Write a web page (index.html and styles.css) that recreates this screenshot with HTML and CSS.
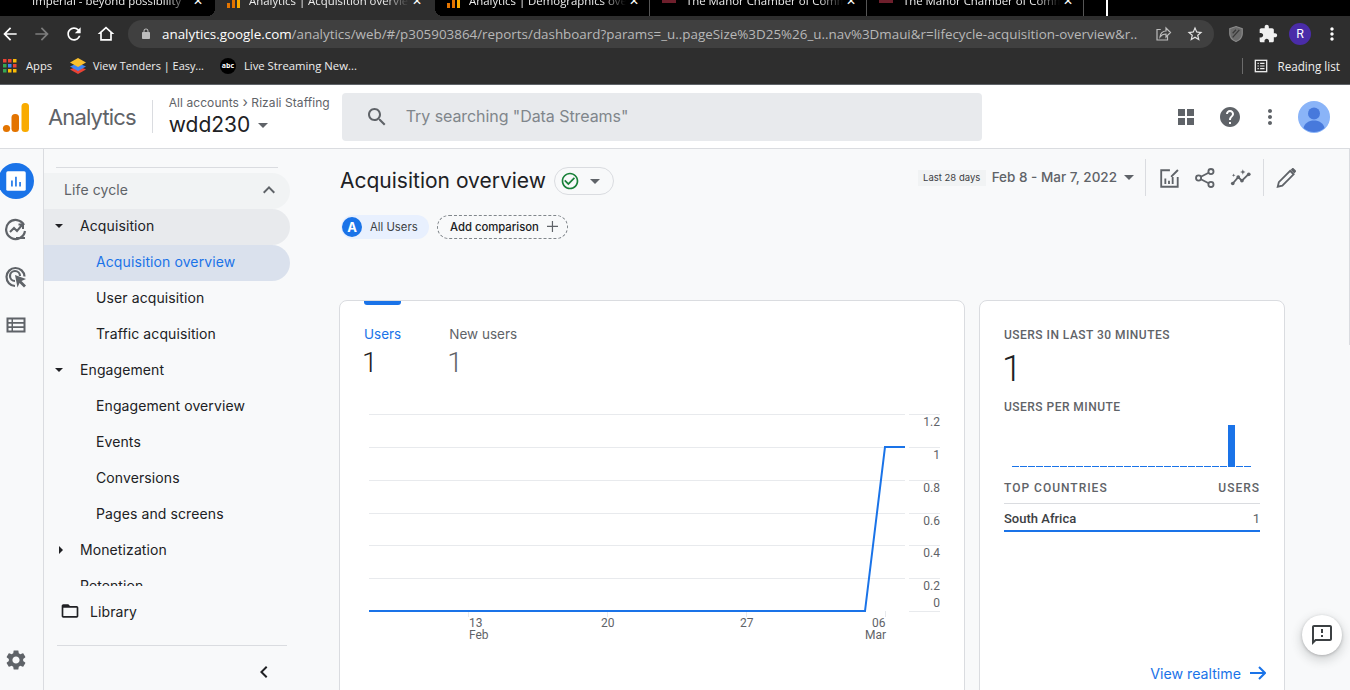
FILE: index.html
```html
<!DOCTYPE html>
<html>
<head lang="en">
    <meta charset="UTF-8">
    <title>Analytics | Acquisition overview</title>
    <link rel="stylesheet" href="styles.css">
</head>
<body>
<div class="tabstrip">
    <div class="tab tab-first"><span class="tab-title">Imperial - beyond possibility</span><span class="tab-x">&#10005;</span></div>
    <div class="tab active">
        <svg class="tab-icon" viewBox="0 0 14 16"><rect x="0" y="11" width="3" height="5" fill="#e37400"/><rect x="5" y="5" width="3" height="11" fill="#e37400"/><rect x="10" y="0" width="3" height="16" fill="#f9ab00"/></svg>
        <span class="tab-title">Analytics | Acquisition overview</span><span class="tab-x">&#10005;</span>
    </div>
    <div class="tab sep">
        <svg class="tab-icon" viewBox="0 0 14 16"><rect x="0" y="11" width="3" height="5" fill="#e37400"/><rect x="5" y="5" width="3" height="11" fill="#e37400"/><rect x="10" y="0" width="3" height="16" fill="#f9ab00"/></svg>
        <span class="tab-title">Analytics | Demographics overview</span><span class="tab-x">&#10005;</span>
    </div>
    <div class="tab sep">
        <span class="tab-icon tab-red"></span>
        <span class="tab-title">The Manor Chamber of Commerce</span><span class="tab-x">&#10005;</span>
    </div>
    <div class="tab sep">
        <span class="tab-icon tab-red"></span>
        <span class="tab-title">The Manor Chamber of Commerce</span><span class="tab-x">&#10005;</span>
    </div>
    <div class="newtab"></div>
</div>

<div class="toolbar">
    <span class="tb-btn"><svg viewBox="0 0 24 24"><path fill="#fff" d="M20 11H7.83l5.59-5.59L12 4l-8 8 8 8 1.41-1.41L7.83 13H20v-2z"/></svg></span>
    <span class="tb-btn"><svg viewBox="0 0 24 24"><path fill="#7d7d7d" d="M12 4l-1.41 1.41L16.17 11H4v2h12.17l-5.58 5.59L12 20l8-8z"/></svg></span>
    <span class="tb-btn"><svg viewBox="0 0 24 24"><path fill="#fff" d="M17.65 6.35C16.2 4.9 14.21 4 12 4c-4.42 0-7.99 3.58-7.99 8s3.57 8 7.99 8c3.73 0 6.84-2.55 7.73-6h-2.08c-.82 2.33-3.04 4-5.65 4-3.31 0-6-2.69-6-6s2.69-6 6-6c1.66 0 3.14.69 4.22 1.78L13 11h7V4l-2.35 2.35z"/></svg></span>
    <span class="tb-btn"><svg viewBox="0 0 24 24"><path fill="#fff" d="M12 3L2 12h3v8h14v-8h3L12 3zm5 15H7v-7.81l5-4.5 5 4.5V18z"/></svg></span>
    <div class="omnibox">
        <svg class="lock" viewBox="0 0 24 24"><path fill="#bdbdbd" d="M18 8h-1V6c0-2.76-2.24-5-5-5S7 3.24 7 6v2H6c-1.1 0-2 .9-2 2v10c0 1.1.9 2 2 2h12c1.1 0 2-.9 2-2V10c0-1.1-.9-2-2-2zM9 6c0-1.66 1.34-3 3-3s3 1.34 3 3v2H9V6z"/></svg>
        <span class="url"><b>analytics.google.com</b>/analytics/web/#/p305903864/reports/dashboard?params=_u..pageSize%3D25%26_u..nav%3Dmaui&amp;r=lifecycle-acquisition-overview&amp;r...</span>
        <svg class="omni-icon" viewBox="0 0 24 24"><path fill="none" stroke="#bdbdbd" stroke-width="1.6" d="M9 6H4v14h14v-5M8 16c0-5 4-8 8-8V4l6 6-6 6v-4c-3 0-6 1-8 4z"/></svg>
        <svg class="omni-icon star" viewBox="0 0 24 24"><path fill="#e3e3e3" d="M22 9.24l-7.19-.62L12 2 9.19 8.63 2 9.24l5.46 4.73L5.82 21 12 17.27 18.18 21l-1.63-7.03L22 9.24zM12 15.4l-3.76 2.27 1-4.28-3.32-2.88 4.38-.38L12 6.1l1.71 4.04 4.38.38-3.32 2.88 1 4.28L12 15.4z"/></svg>
    </div>
    <div class="ext-group">
        <span class="tb-btn"><svg viewBox="0 0 24 24"><path fill="#6b6b6b" stroke="#8a8a8a" stroke-width="1.4" d="M12 3l7.5 2.6v6c0 4.4-3.2 7.600-7.500 9.400-4.300-1.800-7.500-5-7.500-9.400v-6z"/><path stroke="#3a3a3a" stroke-width="1.6" d="M8 16l8-9M8 11l4-4"/></svg></span>
        <span class="tb-btn"><svg viewBox="0 0 24 24"><path fill="#f1f1f1" d="M20.5 11H19V7c0-1.100-.9-2-2-2h-4V3.500C13 2.120 11.880 1 10.500 1S8 2.120 8 3.500V5H4c-1.100 0-1.990.9-1.990 2v3.800H3.500c1.490 0 2.700 1.210 2.700 2.700s-1.210 2.700-2.700 2.700H2V20c0 1.100.9 2 2 2h3.800v-1.500c0-1.490 1.210-2.700 2.700-2.700 1.490 0 2.700 1.210 2.700 2.700V22H17c1.100 0 2-.9 2-2v-4h1.500c1.380 0 2.500-1.120 2.500-2.500S21.880 11 20.500 11z"/></svg></span>
        <span class="tb-btn"><span class="chrome-avatar">R</span></span>
        <span class="tb-btn"><svg viewBox="0 0 24 24"><path fill="#fff" d="M12 8c1.100 0 2-.9 2-2s-.9-2-2-2-2 .9-2 2 .9 2 2 2zm0 2c-1.100 0-2 .9-2 2s.9 2 2 2 2-.9 2-2-.9-2-2-2zm0 6c-1.100 0-2 .9-2 2s.9 2 2 2 2-.9 2-2-.9-2-2-2z"/></svg></span>
    </div>
</div>

<div class="bookmarks">
    <svg class="apps-icon" viewBox="0 0 14 14">
        <rect x="0" y="0" width="3.500" height="3.500" fill="#ea4335"/><rect x="5" y="0" width="3.500" height="3.500" fill="#ea4335"/><rect x="10" y="0" width="3.500" height="3.500" fill="#fbbc04"/>
        <rect x="0" y="5" width="3.500" height="3.500" fill="#34a853"/><rect x="5" y="5" width="3.500" height="3.500" fill="#4285f4"/><rect x="10" y="5" width="3.500" height="3.500" fill="#ea4335"/>
        <rect x="0" y="10" width="3.500" height="3.500" fill="#34a853"/><rect x="5" y="10" width="3.500" height="3.500" fill="#fbbc04"/><rect x="10" y="10" width="3.500" height="3.500" fill="#fbbc04"/>
    </svg>
    <span class="bm-apps">Apps</span>
    <svg class="bm-icon layers" viewBox="0 0 16 16"><path fill="#ea4335" d="M8 8l8 3.500L8 16 0 11.500z"/><path fill="#4285f4" d="M8 5l8 3.500L8 13 0 8.500z"/><path fill="#fbc02d" d="M8 0l8 4.500L8 9 0 4.500z"/></svg>
    <span class="bm-one">View Tenders | Easy...</span>
    <span class="abc">abc</span>
    <span class="bm-two">Live Streaming New...</span>
    <span class="reading">
        <svg class="bm-icon" viewBox="0 0 16 16"><rect x="1.500" y="1.500" width="13" height="13" fill="none" stroke="#eee" stroke-width="1.500"/><path stroke="#eee" stroke-width="1.300" d="M4 5h1.500M7 5h5M4 8h1.500M7 8h5M4 11h1.500M7 11h5"/></svg>
        Reading list
    </span>
</div>

<div class="appbar">
    <svg class="ga-logo" viewBox="0 0 28 30">
        <circle cx="4.500" cy="25.500" r="3.600" fill="#e37400"/>
        <rect x="9.500" y="11" width="7.500" height="18" rx="3.500" fill="#e37400"/>
        <rect x="19.500" y="0" width="7.500" height="29" rx="3.500" fill="#f9ab00"/>
    </svg>
    <span class="ga-name">Analytics</span>
    <span class="ga-sep"></span>
    <div class="account">
        <div class="crumbs">All accounts <span class="crumb-arrow">&#8250;</span> Rizali Staffing</div>
        <div class="property">wdd230 <span class="caret"></span></div>
    </div>
    <div class="search">
        <svg class="icon-24" viewBox="0 0 24 24"><path fill="#5f6368" d="M15.500 14h-.79l-.28-.27C15.410 12.590 16 11.110 16 9.500 16 5.910 13.090 3 9.500 3S3 5.910 3 9.500 5.910 16 9.500 16c1.610 0 3.090-.59 4.230-1.570l.27.28v.79l5 4.990L20.490 19l-4.990-5zm-6 0C7.010 14 5 11.990 5 9.500S7.010 5 9.500 5 14 7.010 14 9.500 11.990 14 9.500 14z"/></svg>
        <span class="search-text">Try searching "Data Streams"</span>
    </div>
    <div class="bar-right">
        <svg class="icon-24" viewBox="0 0 24 24"><path fill="#5f6368" d="M4 4h7v7H4zM13 4h7v7h-7zM4 13h7v7H4zM13 13h7v7h-7z"/></svg>
        <svg class="icon-24 help" viewBox="0 0 24 24"><path fill="#5f6368" d="M12 2C6.480 2 2 6.480 2 12s4.480 10 10 10 10-4.480 10-10S17.520 2 12 2zm1 17h-2v-2h2v2zm2.070-7.750l-.9.920C13.450 12.900 13 13.500 13 15h-2v-.5c0-1.100.45-2.100 1.170-2.830l1.240-1.260c.37-.36.59-.86.59-1.410 0-1.100-.9-2-2-2s-2 .9-2 2H8c0-2.210 1.790-4 4-4s4 1.790 4 4c0 .88-.36 1.680-.93 2.250z"/></svg>
        <svg class="icon-24" viewBox="0 0 24 24"><path fill="#5f6368" d="M12 8c1.100 0 2-.9 2-2s-.9-2-2-2-2 .9-2 2 .9 2 2 2zm0 2c-1.100 0-2 .9-2 2s.9 2 2 2 2-.9 2-2-.9-2-2-2zm0 6c-1.100 0-2 .9-2 2s.9 2 2 2 2-.9 2-2-.9-2-2-2z"/></svg>
        <svg class="avatar" viewBox="0 0 32 32"><circle cx="16" cy="16" r="16" fill="#8ab4f8"/><circle cx="16" cy="12.500" r="6" fill="#4779dc"/><path fill="#4779dc" d="M5.500 27c1-5 5.500-7.500 10.500-7.500s9.500 2.500 10.500 7.500a16 16 0 0 1-21 0z"/></svg>
    </div>
</div>

<div class="page">
    <div class="rail">
        <span class="rail-btn on"><svg viewBox="0 0 24 24"><rect x="3" y="3" width="18" height="18" rx="1.500" fill="#fff"/><path fill="#1a73e8" d="M7.500 11.500h1.500v5.500H7.500zM11.200 8h1.500v9h-1.500zM15 13h1.500v4H15z"/></svg></span>
        <span class="rail-btn"><svg viewBox="0 0 24 24"><path fill="none" stroke="#5f6368" stroke-width="2.200" d="M21 14a9.500 9.500 0 1 1-1-6M21 21H12"/><path fill="none" stroke="#5f6368" stroke-width="2" d="M6 15l4-4 3 3 5-6M14.500 7.500H19V12"/></svg></span>
        <span class="rail-btn"><svg viewBox="0 0 24 24"><path fill="none" stroke="#5f6368" stroke-width="2.200" d="M11 21a9 9 0 1 1 9.500-9.500M11 16a5 5 0 1 1 5-5"/><path fill="#5f6368" d="M11 10l11 4-4.500 2 4.500 4.500-2 2-4.500-4.500-2 4.500z"/></svg></span>
        <span class="rail-btn"><svg viewBox="0 0 24 24"><path fill="#5f6368" fill-rule="evenodd" d="M2.500 4.500h19v15h-19zM4.500 6.500v2.500h3V6.500zM9 6.500v2.500h10.500V6.500zM4.500 10.700v2.600h3v-2.600zM9 10.700v2.600h10.500v-2.600zM4.500 15v2.500h3V15zM9 15v2.500h10.500V15z"/></svg></span>
        <span class="rail-btn gear"><svg viewBox="0 0 24 24"><path fill="#5f6368" d="M19.140 12.940c.04-.3.06-.61.06-.94 0-.32-.02-.64-.07-.94l2.030-1.580c.18-.14.23-.41.12-.61l-1.920-3.320c-.12-.22-.37-.29-.59-.22l-2.390.96c-.5-.38-1.030-.7-1.620-.94l-.36-2.540c-.04-.24-.24-.41-.48-.41h-3.840c-.24 0-.43.17-.47.41l-.36 2.540c-.59.24-1.130.57-1.620.94l-2.390-.96c-.22-.08-.47 0-.59.22L2.740 8.870c-.12.21-.08.47.12.61l2.030 1.580c-.05.3-.09.63-.09.94s.02.64.07.94l-2.030 1.580c-.18.14-.23.41-.12.61l1.920 3.320c.12.22.37.29.59.22l2.390-.96c.5.38 1.030.7 1.620.94l.36 2.540c.05.24.24.41.48.41h3.840c.24 0 .44-.17.47-.41l.36-2.540c.59-.24 1.130-.56 1.620-.94l2.390.96c.22.08.47 0 .59-.22l1.920-3.320c.12-.22.07-.47-.12-.61l-2.010-1.580zM12 15.600c-1.980 0-3.600-1.620-3.600-3.600s1.620-3.600 3.600-3.600 3.600 1.620 3.600 3.600-1.620 3.600-3.600 3.600z"/></svg></span>
    </div>

    <div class="sidenav">
        <div class="nav-rule"></div>
        <div class="nav-scroll">
            <div class="nav-row head">Life cycle
                <svg class="nav-chev" viewBox="0 0 24 24"><path fill="#5f6368" d="M12 8l-6 6 1.410 1.410L12 10.830l4.590 4.580L18 14z"/></svg>
            </div>
            <div class="nav-row parent open-row"><span class="arrow-down"></span>Acquisition</div>
            <div class="nav-row child selected">Acquisition overview</div>
            <div class="nav-row child">User acquisition</div>
            <div class="nav-row child">Traffic acquisition</div>
            <div class="nav-row parent"><span class="arrow-down"></span>Engagement</div>
            <div class="nav-row child">Engagement overview</div>
            <div class="nav-row child">Events</div>
            <div class="nav-row child">Conversions</div>
            <div class="nav-row child">Pages and screens</div>
            <div class="nav-row parent"><span class="arrow-right"></span>Monetization</div>
            <div class="nav-row parent"><span class="arrow-none"></span>Retention</div>
        </div>
        <div class="library">
            <svg viewBox="0 0 24 24"><path fill="#202124" d="M20 6h-8l-2-2H4c-1.100 0-2 .9-2 2v12c0 1.100.9 2 2 2h16c1.100 0 2-.9 2-2V8c0-1.100-.9-2-2-2zm0 12H4V8h16v10z"/></svg>
            Library
        </div>
        <div class="nav-rule foot"></div>
        <div class="collapse">
            <svg viewBox="0 0 24 24"><path fill="#202124" d="M15.410 7.410L14 6l-6 6 6 6 1.410-1.410L10.830 12z"/></svg>
        </div>
    </div>

    <div class="main">
        <div class="head-row">
            <h1 class="page-title">Acquisition overview</h1>
            <div class="status-pill">
                <svg viewBox="0 0 24 24"><path fill="#188038" d="M16.590 7.580L10 14.170l-3.590-3.580L5 12l5 5 8-8zM12 2C6.480 2 2 6.480 2 12s4.480 10 10 10 10-4.480 10-10S17.520 2 12 2zm0 18c-4.420 0-8-3.580-8-8s3.580-8 8-8 8 3.580 8 8-3.580 8-8 8z"/></svg>
                <span class="caret small"></span>
            </div>
            <div class="head-tools">
                <span class="range-chip">Last 28 days</span>
                <span class="range">Feb 8 - Mar 7, 2022</span>
                <span class="caret small"></span>
                <span class="tool-sep"></span>
                <svg class="tool first" viewBox="0 0 24 24"><path fill="none" stroke="#5f6368" stroke-width="2" d="M13 3.500H3.500v18h18V11"/><path fill="#5f6368" d="M7 12.500h2v6H7zM11 15h2v3.500h-2zM15 11h2v7.500h-2zM14 9.500l7-7 1.500 1.500-7 7H14z"/></svg>
                <svg class="tool" viewBox="0 0 24 24"><g fill="none" stroke="#5f6368" stroke-width="2"><circle cx="18.500" cy="5" r="2.800"/><circle cx="5" cy="12" r="2.800"/><circle cx="18.500" cy="19" r="2.800"/><path d="M7.500 10.700l8.500-4.400M7.500 13.300l8.500 4.400"/></g></svg>
                <svg class="tool" viewBox="0 0 24 24"><path fill="none" stroke="#5f6368" stroke-width="2" d="M3 18l6-7 4 4 7-7"/><g fill="#5f6368"><circle cx="3" cy="18" r="2"/><circle cx="9" cy="11" r="2"/><circle cx="13" cy="15" r="2"/><circle cx="20.500" cy="8" r="2"/><path d="M14 2.500l.8 2.200 2.200.8-2.200.8L14 8.500l-.8-2.200-2.200-.8 2.200-.8zM4 7l.5 1.500L6 9l-1.500.5L4 11l-.5-1.500L2 9l1.500-.5z"/></g></svg>
                <span class="tool-sep second"></span>
                <svg class="tool last" viewBox="0 0 24 24"><path fill="none" stroke="#5f6368" stroke-width="2" d="M3 21.500l1.200-5L16.500 4.200l3.800 3.800L8 20.300z"/><path fill="#5f6368" d="M17 3l1.500-1.500c.6-.6 1.400-.6 2 0l2 2c.6.6.6 1.400 0 2L21 7z"/></svg>
            </div>
        </div>

        <div class="chips">
            <span class="user-chip"><span class="letter">A</span>All Users</span>
            <span class="add-chip">Add comparison
                <svg viewBox="0 0 12 12"><path fill="#5f6368" d="M5.300 0h1.300v5.300H12v1.300H6.600V12H5.300V6.600H0V5.300h5.300z"/></svg>
            </span>
        </div>

        <div class="cards">
            <div class="card card-chart">
                <div class="tab-mark"></div>
                <div class="metrics">
                    <div class="metric on">
                        <div class="metric-name">Users</div>
                        <div class="metric-val">1</div>
                    </div>
                    <div class="metric">
                        <div class="metric-name">New users</div>
                        <div class="metric-val">1</div>
                    </div>
                </div>
                <svg class="chart" viewBox="360 400 600 250">
                    <g stroke="#e8eaed" stroke-width="1">
                        <path d="M369 414.500H905M909 414.500H940"/>
                        <path d="M369 447.500H905M909 447.500H940"/>
                        <path d="M369 480.500H905M909 480.500H940"/>
                        <path d="M369 513.500H905M909 513.500H940"/>
                        <path d="M369 545.500H905M909 545.500H940"/>
                        <path d="M369 578.500H905M909 578.500H940"/>
                        <path d="M909 611.500H940"/>
                        <path d="M468.500 611V617M607.500 611V617M746.500 611V617M885.500 611V617"/>
                    </g>
                    <path d="M369 611H865L885 447H905" fill="none" stroke="#1a73e8" stroke-width="2"/>
                    <g class="y-labels" text-anchor="end">
                        <text x="940" y="426">1.2</text>
                        <text x="940" y="459">1</text>
                        <text x="940" y="492">0.8</text>
                        <text x="940" y="525">0.6</text>
                        <text x="940" y="557">0.4</text>
                        <text x="940" y="590">0.2</text>
                        <text x="940" y="607">0</text>
                    </g>
                    <g class="x-labels">
                        <text x="469" y="627">13</text>
                        <text x="469" y="639">Feb</text>
                        <text x="601" y="627">20</text>
                        <text x="740" y="627">27</text>
                        <text x="872" y="627">06</text>
                        <text x="865" y="639">Mar</text>
                    </g>
                </svg>
            </div>

            <div class="card card-side">
                <div class="over">USERS IN LAST 30 MINUTES</div>
                <div class="big-num">1</div>
                <div class="over per-min">USERS PER MINUTE</div>
                <div class="bars">
                    <i></i><i></i><i></i><i></i><i></i><i></i><i></i><i></i><i></i><i></i>
                    <i></i><i></i><i></i><i></i><i></i><i></i><i></i><i></i><i></i><i></i>
                    <i></i><i></i><i></i><i></i><i></i><i></i><i></i><i class="tall"></i><i></i><i></i>
                </div>
                <div class="over table-head"><span>TOP COUNTRIES</span><span>USERS</span></div>
                <div class="table-row"><span>South Africa</span><span class="num">1</span></div>
                <a class="realtime">View realtime
                    <svg viewBox="0 0 16 14"><path fill="none" stroke="#1a73e8" stroke-width="2" d="M0 7h14.500M9 1l6 6-6 6"/></svg>
                </a>
            </div>
        </div>
    </div>
    <div class="scroll-thumb"></div>
</div>

<div class="feedback">
    <svg viewBox="0 0 24 24"><path fill="#3c4043" d="M20 2H4c-1.100 0-2 .9-2 2v18l4-4h14c1.100 0 2-.9 2-2V4c0-1.100-.9-2-2-2zm0 14H5.170L4 17.170V4h16v12zM11 12h2v2h-2zm0-6h2v4h-2z"/></svg>
</div>
</body>
</html>
```

FILE: styles.css
```css
*{
    margin: 0;
    padding: 0;
    box-sizing: border-box;
}
html,body{
    height: 100%;
    overflow: hidden;
}
body{
    display: flex;
    flex-direction: column;
    background: #f8f9fa;
    font-family: "Inter", "Roboto", "Liberation Sans", sans-serif;
    color: #202124;
}
svg{
    display: block;
    flex: none;
}

/* browser chrome */
.tabstrip{
    display: flex;
    align-items: flex-end;
    height: 16px;
    background: #000;
    overflow: hidden;
    font-family: "Open Sans", "Liberation Sans", sans-serif;
    font-size: 11.400px;
    color: #eee;
    flex: none;
}
.tab{
    position: relative;
    display: flex;
    align-items: center;
    width: 217px;
    height: 32px;
    flex: none;
    padding: 0 10px 0 12px;
}
.tab-first{
    width: 215px;
    padding-left: 32px;
    padding-right: 9px;
}
.tab.active{
    background: #2e2e2e;
    border-radius: 8px 8px 0 0;
    width: 220px;
}
.tab.active::before,.tab.active::after{
    content: "";
    position: absolute;
    bottom: 0;
    width: 8px;
    height: 8px;
}
.tab.active::before{
    left: -8px;
    background: radial-gradient(circle at 0 0, #000 8px, #2e2e2e 8px);
}
.tab.active::after{
    right: -8px;
    background: radial-gradient(circle at 100% 0, #000 8px, #2e2e2e 8px);
}
.tab.sep{
    padding-right: 7px;
    border-right: 1px solid #555;
}
.tab.active + .sep{
    width: 215px;
}
.tab-icon{
    width: 14px;
    height: 16px;
    margin-right: 8px;
    flex: none;
}
.tab-red{
    height: 6px;
    margin-right: 10px;
    background: #6e1f2c;
}
.tab-title{
    flex: 1;
    white-space: nowrap;
    overflow: hidden;
    text-overflow: clip;
    -webkit-mask-image: linear-gradient(90deg, #000 85%, transparent);
    mask-image: linear-gradient(90deg, #000 85%, transparent);
}
.tab-x{
    width: 16px;
    text-align: center;
    font-size: 12px;
    color: #fff;
}
.newtab{
    width: 2px;
    height: 16px;
    margin-left: 22px;
    background: #fff;
}

.toolbar{
    display: flex;
    align-items: center;
    height: 36px;
    background: #2e2e2e;
    flex: none;
}
.tb-btn{
    display: flex;
    align-items: center;
    justify-content: center;
    width: 32px;
    height: 28px;
    flex: none;
}
.toolbar > .tb-btn:first-child{
    margin-left: -6px;
}
.tb-btn svg{
    width: 20px;
    height: 20px;
}
.omnibox{
    display: flex;
    align-items: center;
    width: 1086px;
    height: 28px;
    margin-left: 6px;
    padding-left: 12px;
    background: #404040;
    border-radius: 14px;
    font-family: "Open Sans", "Liberation Sans", sans-serif;
    flex: none;
}
.lock{
    width: 12px;
    height: 14px;
}
.url{
    margin-left: 10px;
    font-size: 13.400px;
    color: #b8b8b8;
    white-space: nowrap;
    overflow: hidden;
    width: 976px;
    flex: none;
}
.url b{
    font-weight: 400;
    color: #fff;
}
.omni-icon{
    width: 18px;
    height: 18px;
    margin-left: 16px;
}
.omni-icon.star{
    margin-left: 14px;
}
.ext-group{
    display: flex;
    margin-left: 6px;
}
.chrome-avatar{
    width: 22px;
    height: 22px;
    border-radius: 50%;
    background: #4a2ca8;
    color: #fff;
    font-size: 12px;
    line-height: 22px;
    text-align: center;
}

.bookmarks{
    display: flex;
    align-items: center;
    height: 33px;
    padding: 0 10px 5px 3px;
    background: #2e2e2e;
    border-bottom: 1px solid #5f6368;
    font-family: "Open Sans", "Liberation Sans", sans-serif;
    font-size: 11.200px;
    color: #eee;
    flex: none;
}
.apps-icon{
    width: 14px;
    height: 14px;
}
.bm-apps{
    margin-left: 9px;
}
.bm-icon{
    width: 16px;
    height: 16px;
}
.layers{
    margin-left: 18px;
}
.bm-one{
    margin-left: 7px;
    font-size: 10.900px;
}
.abc{
    width: 16px;
    height: 16px;
    margin-left: 16px;
    border-radius: 50%;
    background: #000;
    color: #fff;
    font-size: 7px;
    font-weight: 700;
    line-height: 16px;
    text-align: center;
}
.bm-two{
    margin-left: 8px;
    font-size: 11.300px;
}
.reading{
    display: flex;
    align-items: center;
    gap: 9px;
    margin-left: auto;
    padding-left: 11px;
    border-left: 1px solid #6b6b6b;
    font-size: 11.700px;
}
.reading svg{
    width: 14px;
    height: 14px;
}

/* analytics header */
.appbar{
    display: flex;
    align-items: center;
    height: 64px;
    padding: 0 20px 0 2px;
    background: #fff;
    border-bottom: 1px solid #dadce0;
    flex: none;
}
.ga-logo{
    width: 28px;
    height: 30px;
    margin-top: 3px;
}
.ga-name{
    margin-left: 18px;
    font-size: 22px;
    letter-spacing: -0.85px;
    color: #5f6368;
}
.ga-sep{
    width: 1px;
    height: 33px;
    margin-left: 16px;
    background: #dadce0;
}
.account{
    margin-left: 16px;
    width: 161px;
}
.crumbs{
    font-size: 12px;
    line-height: 16px;
    color: #5f6368;
    white-space: nowrap;
    letter-spacing: 0.07px;
}
.crumb-arrow{
    font-size: 14px;
}
.property{
    display: flex;
    align-items: center;
    gap: 8px;
    font-size: 21px;
    line-height: 28px;
    color: #202124;
}
.caret{
    width: 0;
    height: 0;
    border: 5px solid transparent;
    border-top-color: #5f6368;
    border-bottom-width: 0;
    flex: none;
}
.search{
    display: flex;
    align-items: center;
    gap: 17px;
    width: 640px;
    height: 48px;
    margin-left: 12px;
    padding-left: 23px;
    background: #e8eaed;
    border-radius: 4px;
    font-size: 16px;
    letter-spacing: -0.07px;
    color: #80868b;
}
.search-text{
    padding-bottom: 2px;
}
.icon-24{
    width: 24px;
    height: 24px;
}
.bar-right{
    display: flex;
    align-items: center;
    gap: 16px;
    margin-left: auto;
}
.help{
    margin-left: 4px;
}
.avatar{
    width: 32px;
    height: 32px;
}

/* page */
.page{
    display: flex;
    flex: 1;
    min-height: 0;
    overflow: hidden;
}
.rail{
    display: flex;
    flex-direction: column;
    width: 44px;
    padding: 8px 0 6px;
    border-right: 1px solid #dadce0;
    flex: none;
}
.rail-btn{
    display: flex;
    align-items: center;
    justify-content: center;
    width: 36px;
    height: 48px;
    margin-left: -2px;
    flex: none;
}
.rail-btn svg{
    width: 24px;
    height: 24px;
}
.rail-btn.on{
    position: relative;
    z-index: 1;
    height: 36px;
    margin: 6px 0 6px -2px;
    background: #1a73e8;
    border-radius: 50%;
}
.rail-btn.on svg{
    width: 26px;
    height: 26px;
}
.rail-btn.gear{
    margin-top: auto;
}

.sidenav{
    width: 295px;
    padding-top: 18px;
    flex: none;
}
.nav-rule{
    width: 222px;
    height: 1px;
    margin: 0 0 5px 12px;
    background: #dadce0;
}
.nav-scroll{
    height: 413px;
    overflow: hidden;
}
.nav-row{
    display: flex;
    align-items: center;
    width: 246px;
    height: 36px;
    padding-bottom: 3px;
    border-radius: 0 18px 18px 0;
    font-size: 14px;
    color: #202124;
    letter-spacing: 0.1px;
}
.nav-row.head{
    justify-content: space-between;
    padding: 0 9px 3px 20px;
    background: #f1f3f4;
    color: #5f6368;
}
.nav-chev{
    width: 24px;
    height: 24px;
}
.nav-row.parent{
    padding-left: 11px;
}
.nav-row.open-row{
    background: #e8eaed;
}
.nav-row.child{
    padding-left: 52px;
}
.nav-row.selected{
    background: #dae1ed;
    color: #1a73e8;
}
.arrow-down,.arrow-right,.arrow-none{
    width: 8px;
    height: 4px;
    margin-right: 17px;
    flex: none;
}
.arrow-down{
    border: 4px solid transparent;
    border-top: 4px solid #202124;
    border-bottom: 0;
}
.arrow-right{
    width: 4px;
    height: 8px;
    margin: 0 17px 0 4px;
    border: 4px solid transparent;
    border-left: 4px solid #202124;
    border-right: 0;
}
.library{
    display: flex;
    align-items: center;
    height: 20px;
    margin: 15px 0 0 16px;
    font-size: 14px;
    letter-spacing: 0.1px;
}
.library svg{
    width: 20px;
    height: 20px;
    margin-right: 10px;
}
.nav-rule.foot{
    width: 230px;
    margin: 24px 0 0 13px;
}
.collapse{
    display: flex;
    align-items: center;
    width: 232px;
    height: 52px;
    padding-left: 208px;
}
.collapse svg{
    width: 24px;
    height: 24px;
}

.main{
    width: 1010px;
    padding-top: 18px;
    flex: none;
}
.head-row{
    display: flex;
    height: 28px;
    padding-right: 52px;
}
.page-title{
    font-size: 21px;
    font-weight: 400;
    line-height: 28px;
    margin-left: 1px;
    color: #202124;
}
.status-pill{
    display: flex;
    align-items: center;
    width: 60px;
    height: 28px;
    margin-left: 8px;
    padding-left: 5px;
    border: 1px solid #dadce0;
    border-radius: 14px;
}
.status-pill svg{
    width: 20px;
    height: 20px;
}
.status-pill .caret{
    margin-left: 10px;
}
.head-tools{
    display: flex;
    align-items: center;
    height: 37px;
    margin: -8px 0 0 auto;
}
.range-chip{
    width: 68px;
    height: 16px;
    background: #f1f3f4;
    font-size: 9.500px;
    line-height: 16px;
    text-align: center;
    color: #3c4043;
}
.range{
    margin-left: 6px;
    padding-bottom: 2px;
    font-size: 13.500px;
    font-weight: 500;
    color: #5f6368;
    white-space: nowrap;
}
.head-tools .caret{
    margin: 0 0 0 7px;
}
.tool-sep{
    width: 1px;
    height: 37px;
    margin-left: 11px;
    background: #dadce0;
}
.tool{
    width: 22px;
    height: 22px;
    margin-left: 14px;
}
.tool.first{
    margin-left: 12px;
}
.tool-sep.second{
    margin-left: 11px;
}
.tool.last{
    margin-left: 11px;
}

.chips{
    display: flex;
    gap: 8px;
    margin: 20px 0 0 2px;
    font-size: 11.300px;
    color: #3c4043;
}
.user-chip{
    display: flex;
    align-items: center;
    width: 88px;
    height: 24px;
    background: #e8f0fe;
    border-radius: 12px;
}
.letter{
    width: 20px;
    height: 20px;
    margin: 0 8px 0 1px;
    background: #1a73e8;
    border-radius: 50%;
    color: #fff;
    font-size: 13px;
    font-weight: 700;
    line-height: 20px;
    text-align: center;
}
.add-chip{
    display: flex;
    align-items: center;
    gap: 8px;
    width: 131px;
    height: 24px;
    padding: 0 0 1px 12px;
    border: 1px dashed #80868b;
    border-radius: 12px;
    font-weight: 500;
    color: #202124;
    white-space: nowrap;
}
.add-chip svg{
    width: 11px;
    height: 11px;
}

.cards{
    display: flex;
    gap: 14px;
    margin-top: 61px;
}
.card{
    height: 440px;
    background: #fff;
    border: 1px solid #dadce0;
    border-radius: 8px;
    flex: none;
}
.card-chart{
    width: 626px;
}
.tab-mark{
    width: 37px;
    height: 4px;
    margin-left: 24px;
    background: #1a73e8;
    border-radius: 0 0 3px 3px;
}
.metrics{
    display: flex;
    gap: 48px;
    margin: 19px 0 0 24px;
}
.metric-name{
    font-size: 13.500px;
    line-height: 20px;
    color: #5f6368;
}
.metric.on .metric-name{
    color: #1a73e8;
}
.metric-val{
    margin: 1px 0 0 -2px;
    font-family: "Roboto", sans-serif;
    font-size: 28px;
    font-weight: 300;
    line-height: 36px;
    color: #5f6368;
}
.metric.on .metric-val{
    color: #202124;
}
.chart{
    width: 600px;
    height: 250px;
    margin: 19px 0 0 20px;
}
.chart text{
    font-family: "Roboto", sans-serif;
    font-size: 12px;
    fill: #5f6368;
}

.card-side{
    width: 306px;
    padding: 26px 24px 0;
}
.over{
    font-family: "Roboto", sans-serif;
    font-size: 12px;
    font-weight: 500;
    line-height: 16px;
    letter-spacing: 0.47px;
    color: #5f6368;
    white-space: nowrap;
}
.big-num{
    margin: 6px 0 0 -2px;
    font-family: "Roboto", sans-serif;
    font-size: 36px;
    font-weight: 300;
    line-height: 40px;
    color: #202124;
}
.per-min{
    margin-top: 10px;
}
.bars{
    display: flex;
    align-items: flex-end;
    gap: 1px;
    height: 42px;
    margin: 10px 0 0 8px;
}
.bars i{
    width: 7px;
    height: 1px;
    background: #1a73e8;
}
.bars i.tall{
    height: 42px;
}
.table-head{
    display: flex;
    justify-content: space-between;
    margin-top: 13px;
    padding-bottom: 7px;
    height: 24px;
    border-bottom: 1px solid #dadce0;
    letter-spacing: 1px;
}
.table-row{
    display: flex;
    justify-content: space-between;
    padding: 5px 0 1px;
    border-bottom: 2px solid #1a73e8;
    font-family: "Roboto", sans-serif;
    font-size: 13px;
    font-weight: 500;
    line-height: 20px;
    color: #3c4043;
}
.table-row .num{
    font-weight: 400;
    color: #5f6368;
}
.realtime{
    display: flex;
    align-items: center;
    justify-content: flex-end;
    gap: 9px;
    height: 20px;
    margin: 131px -6px 0 0;
    font-size: 14.200px;
    color: #1a73e8;
}
.realtime svg{
    width: 16px;
    height: 14px;
}

.scroll-thumb{
    width: 1px;
    height: 196px;
    background: #dadce0;
    flex: none;
}

.feedback{
    position: absolute;
    left: 1302px;
    top: 615px;
    display: flex;
    align-items: center;
    justify-content: center;
    width: 40px;
    height: 40px;
    background: #fff;
    border-radius: 50%;
    box-shadow: 0 1px 3px rgba(60,64,67,.3), 0 4px 8px 3px rgba(60,64,67,.15);
}
.feedback svg{
    width: 24px;
    height: 24px;
}
```
